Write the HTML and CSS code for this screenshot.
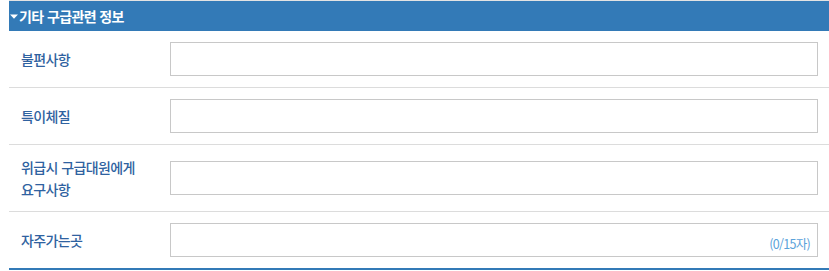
FILE: index.html
```html
<!DOCTYPE html>
<html lang="ko">
<head>
<meta charset="utf-8">
<link rel="stylesheet" href="styles.css">
</head>
<body>
<section class="panel">
  <h2 class="panel-head"><svg class="caret" width="8" height="5" viewBox="0 0 8 5"><path d="M0 0.5H8L4 4.8Z" fill="#fff"/></svg>기타 구급관련 정보</h2>
  <div class="row">
    <div class="label">불편사항</div>
    <div class="field"><input class="input" type="text"></div>
  </div>
  <div class="row">
    <div class="label">특이체질</div>
    <div class="field"><input class="input" type="text"></div>
  </div>
  <div class="row">
    <div class="label">위급시 구급대원에게<br>요구사항</div>
    <div class="field"><input class="input" type="text"></div>
  </div>
  <div class="row last">
    <div class="label">자주가는곳</div>
    <div class="field"><input class="input" type="text"><span class="count">(0/15자)</span></div>
  </div>
</section>
</body>
</html>
```
FILE: styles.css
```css
html, body {
  margin: 0;
  padding: 0;
  background: #fff;
}
body {
  font-family: "Noto Sans CJK KR", "Noto Sans", sans-serif;
}
.panel {
  margin-left: 9px;
  border-top: 1px solid #e3e3e3;
  border-bottom: 2px solid #337ab7;
}
.panel-head {
  margin: 0;
  height: 30px;
  background: #337ab7;
  color: #fff;
  font-size: 14px;
  font-weight: 700;
  display: flex;
  align-items: center;
  padding-left: 1px;
  letter-spacing: -0.6px;
}
.caret {
  margin: 0 1px 0 0;
}
.row {
  display: flex;
  align-items: center;
  padding: 11px 11px 11px 0;
  border-bottom: 1px solid #dcdcdc;
}
.row.last {
  border-bottom: none;
}
.label {
  width: 149px;
  padding-left: 12px;
  color: #2f62a0;
  font-size: 14px;
  font-weight: 500;
  line-height: 22px;
  letter-spacing: -0.6px;
}
.field {
  flex: 1;
  position: relative;
  display: flex;
}
.input {
  flex: 1;
  height: 34px;
  box-sizing: border-box;
  border: 1px solid #c8c8c8;
  margin: 0;
  padding: 0 8px;
  font-family: inherit;
  outline: none;
}
.count {
  position: absolute;
  right: 8px;
  bottom: 6px;
  font-size: 12.5px;
  color: #5aa2da;
  letter-spacing: -0.7px;
  line-height: 14px;
}
```
